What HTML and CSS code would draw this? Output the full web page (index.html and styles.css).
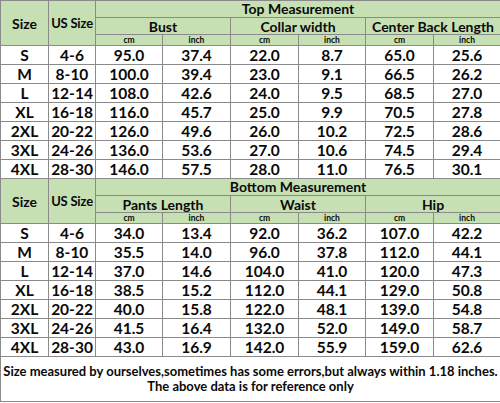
FILE: index.html
```html
<!DOCTYPE html>
<html>
<head>
<meta charset="utf-8">
<link rel="stylesheet" href="styles.css">
</head>
<body>
<table class="chart">
  <colgroup>
    <col class="c-size"><col class="c-us"><col class="c-a"><col class="c-b"><col class="c-b"><col class="c-a"><col class="c-b"><col class="c-c">
  </colgroup>
  <tbody>
    <tr class="h1">
      <th rowspan="3" class="key">Size</th>
      <th rowspan="3" class="key us">US Size</th>
      <th colspan="6" class="sect">Top Measurement</th>
    </tr>
    <tr class="h2">
      <th colspan="2">Bust</th>
      <th colspan="2">Collar width</th>
      <th colspan="2">Center Back Length</th>
    </tr>
    <tr class="h3">
      <th class="unit">cm</th><th class="unit">inch</th>
      <th class="unit">cm</th><th class="unit">inch</th>
      <th class="unit">cm</th><th class="unit">inch</th>
    </tr>
    <tr><td>S</td><td>4-6</td><td>95.0</td><td>37.4</td><td>22.0</td><td>8.7</td><td>65.0</td><td>25.6</td></tr>
    <tr><td>M</td><td>8-10</td><td>100.0</td><td>39.4</td><td>23.0</td><td>9.1</td><td>66.5</td><td>26.2</td></tr>
    <tr><td>L</td><td>12-14</td><td>108.0</td><td>42.6</td><td>24.0</td><td>9.5</td><td>68.5</td><td>27.0</td></tr>
    <tr><td>XL</td><td>16-18</td><td>116.0</td><td>45.7</td><td>25.0</td><td>9.9</td><td>70.5</td><td>27.8</td></tr>
    <tr><td>2XL</td><td>20-22</td><td>126.0</td><td>49.6</td><td>26.0</td><td>10.2</td><td>72.5</td><td>28.6</td></tr>
    <tr><td>3XL</td><td>24-26</td><td>136.0</td><td>53.6</td><td>27.0</td><td>10.6</td><td>74.5</td><td>29.4</td></tr>
    <tr><td>4XL</td><td>28-30</td><td>146.0</td><td>57.5</td><td>28.0</td><td>11.0</td><td>76.5</td><td>30.1</td></tr>

    <tr class="h1">
      <th rowspan="3" class="key">Size</th>
      <th rowspan="3" class="key us">US Size</th>
      <th colspan="6" class="sect">Bottom Measurement</th>
    </tr>
    <tr class="h2">
      <th colspan="2">Pants Length</th>
      <th colspan="2">Waist</th>
      <th colspan="2">Hip</th>
    </tr>
    <tr class="h3">
      <th class="unit">cm</th><th class="unit">inch</th>
      <th class="unit">cm</th><th class="unit">inch</th>
      <th class="unit">cm</th><th class="unit">inch</th>
    </tr>
    <tr><td>S</td><td>4-6</td><td>34.0</td><td>13.4</td><td>92.0</td><td>36.2</td><td>107.0</td><td>42.2</td></tr>
    <tr><td>M</td><td>8-10</td><td>35.5</td><td>14.0</td><td>96.0</td><td>37.8</td><td>112.0</td><td>44.1</td></tr>
    <tr><td>L</td><td>12-14</td><td>37.0</td><td>14.6</td><td>104.0</td><td>41.0</td><td>120.0</td><td>47.3</td></tr>
    <tr><td>XL</td><td>16-18</td><td>38.5</td><td>15.2</td><td>112.0</td><td>44.1</td><td>129.0</td><td>50.8</td></tr>
    <tr><td>2XL</td><td>20-22</td><td>40.0</td><td>15.8</td><td>122.0</td><td>48.1</td><td>139.0</td><td>54.8</td></tr>
    <tr><td>3XL</td><td>24-26</td><td>41.5</td><td>16.4</td><td>132.0</td><td>52.0</td><td>149.0</td><td>58.7</td></tr>
    <tr><td>4XL</td><td>28-30</td><td>43.0</td><td>16.9</td><td>142.0</td><td>55.9</td><td>159.0</td><td>62.6</td></tr>

    <tr class="note">
      <td colspan="8">Size measured by ourselves,sometimes has some errors,but always within 1.18 inches.<br>The above data is for reference only</td>
    </tr>
  </tbody>
</table>
</body>
</html>
```

FILE: styles.css
```css
html, body {
  margin: 0;
  padding: 0;
  background: #ffffff;
}

.chart {
  width: 500px;
  table-layout: fixed;
  border-collapse: collapse;
  font-family: "Lato", "Liberation Sans", sans-serif;
  font-weight: 700;
  color: #0a0a0a;
}

.c-size { width: 48px; }
.c-us { width: 47px; }
.c-a { width: 67px; }
.c-b { width: 68px; }
.c-c { width: 67px; }

.chart th,
.chart td {
  border: 1px solid #8a8a8a;
  padding: 0;
  text-align: center;
  vertical-align: middle;
  white-space: nowrap;
  overflow: hidden;
}

.chart th {
  background: #c6e0b4;
  font-weight: 700;
}

.h1 { height: 17px; }
.h2 { height: 17px; }
.h3 { height: 11px; }

.sect { font-size: 14px; line-height: 14px; }
.h2 th { font-size: 14px; line-height: 15px; }
.key { font-size: 14px; }
.key.us { font-size: 13px; letter-spacing: -0.2px; }

.unit {
  font-size: 8.5px;
  line-height: 9px;
  font-weight: 400;
}

.chart td {
  height: 18px;
  font-size: 15.5px;
  line-height: 16px;
}

.note td {
  height: 44px;
  font-size: 13px;
  line-height: 15px;
}
```
